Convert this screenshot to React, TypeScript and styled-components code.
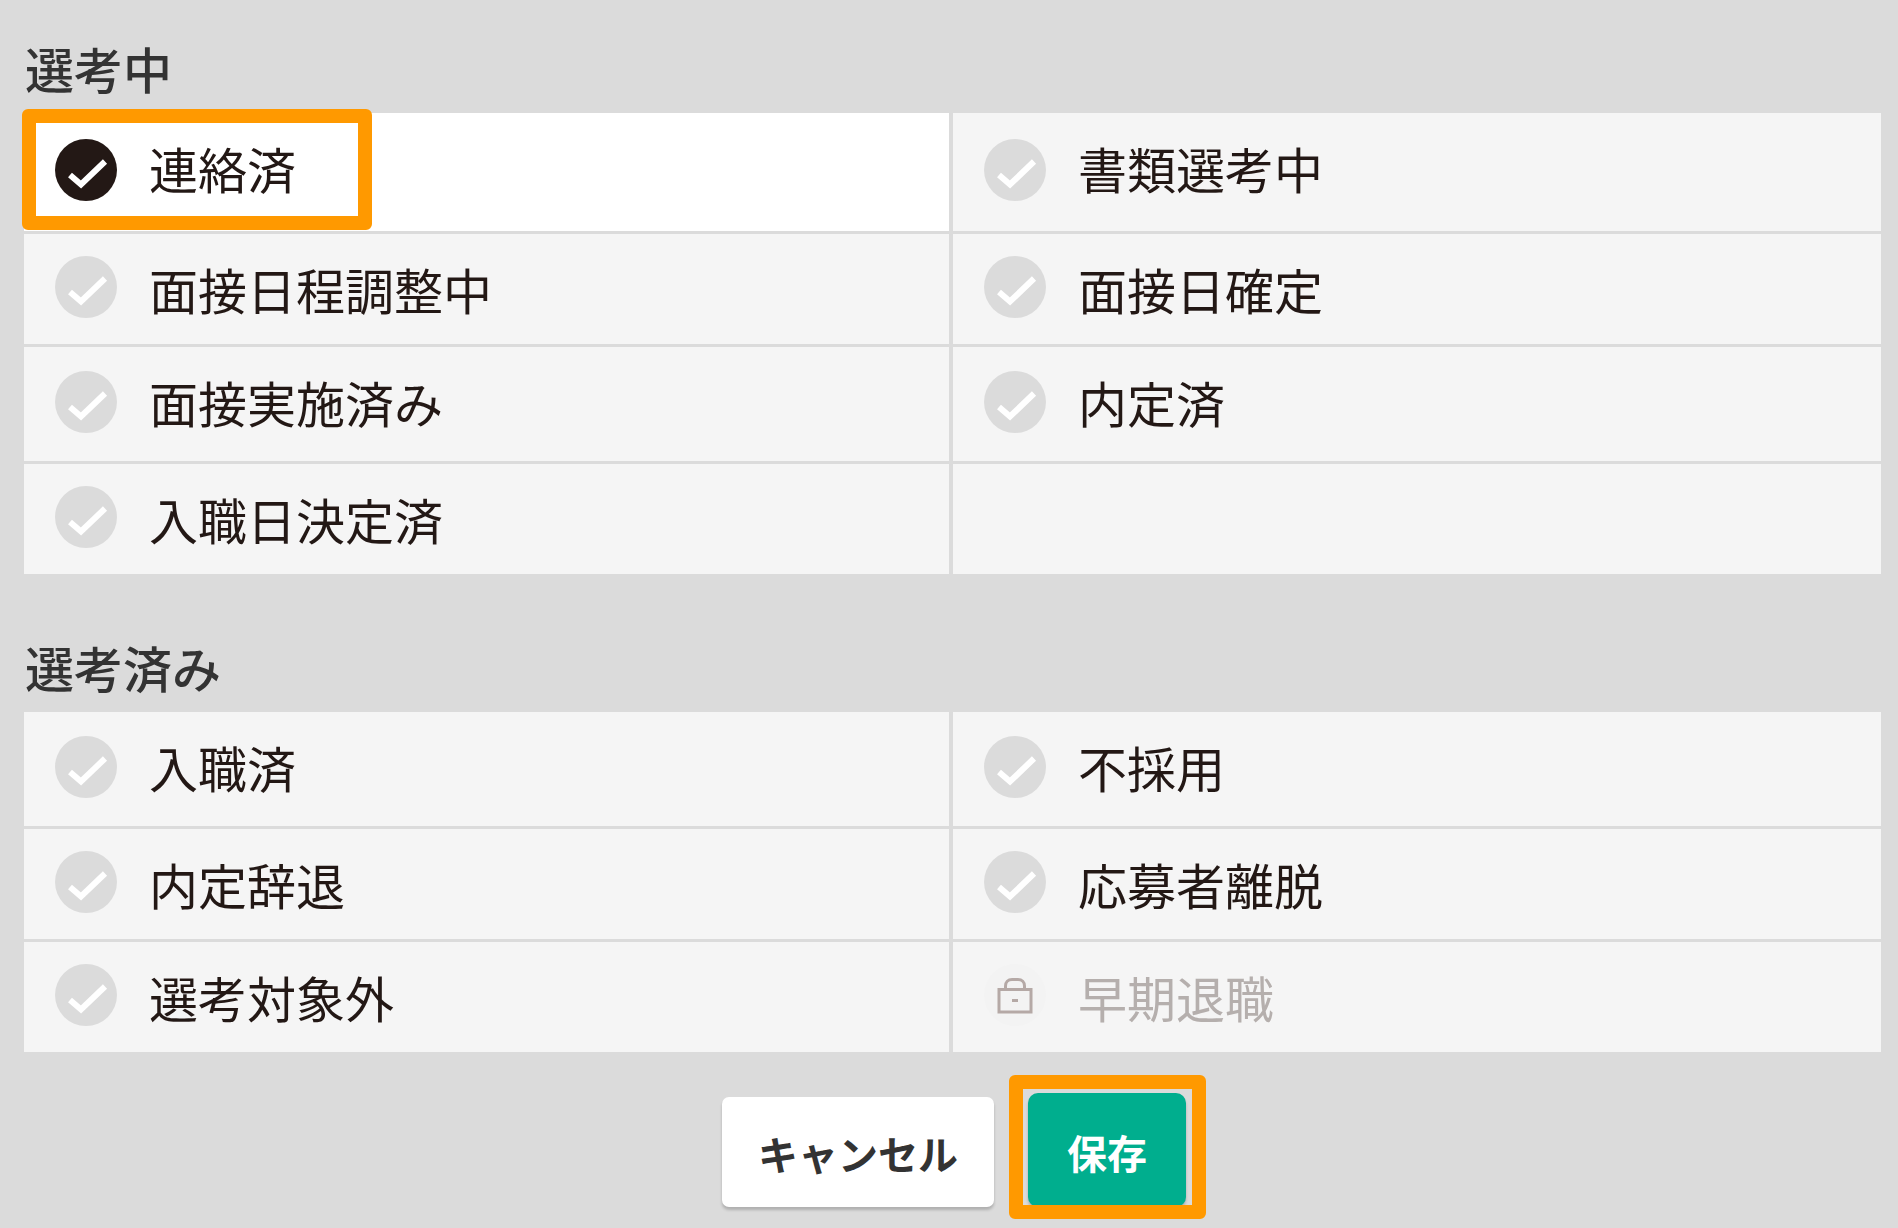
import React, { useState } from "react";
import styled, { createGlobalStyle } from "styled-components";

const GlobalStyle = createGlobalStyle`
  * { box-sizing: border-box; }
  body {
    margin: 0;
    background: #dbdbdb;
    color: #231815;
    font-family: "Noto Sans CJK JP", "Noto Sans", sans-serif;
  }
`;

const Form = styled.form`
  display: flex;
  flex-direction: column;
  padding: 38px 17px 20px 24px;
`;

const Section = styled.fieldset`
  display: flex;
  flex-direction: column;
  min-width: 0;
  margin: 0;
  padding: 0;
  border: 0;

  & + & {
    margin-top: 63px;
  }
`;

const Heading = styled.legend`
  width: 100%;
  padding: 0 1px 15px;
  color: #333;
  font-size: 49px;
  font-weight: 500;
  line-height: 60px;
`;

const Grid = styled.div<{ $rows: string }>`
  display: grid;
  grid-template-columns: 925fr 928fr;
  grid-template-rows: ${(p) => p.$rows};
  gap: 3px 4px;
`;

const Cell = styled.label<{ $selected?: boolean; $locked?: boolean }>`
  position: relative;
  display: flex;
  align-items: center;
  gap: 32px;
  padding: 0 31px 4px;
  background: ${(p) => (p.$selected ? "#fff" : "#f5f5f5")};
  color: ${(p) => (p.$locked ? "#b5afad" : "#231815")};
  cursor: ${(p) => (p.$locked ? "not-allowed" : "pointer")};
`;

const EmptyCell = styled.div`
  background: #f5f5f5;
`;

const Mark = styled.span`
  display: grid;
  flex: none;
  width: 62px;
  height: 62px;

  & > * {
    grid-area: 1 / 1;
  }
`;

const Radio = styled.input`
  appearance: none;
  width: 62px;
  height: 62px;
  margin: 0;
  border-radius: 50%;
  background: #dbdbdb;
  cursor: inherit;

  &:checked {
    background: #231815;
  }

  &:disabled {
    background: #f3f3f3;
  }
`;

const Glyph = styled.svg`
  width: 62px;
  height: 62px;
  fill: none;
  pointer-events: none;
`;

const CellText = styled.span`
  align-self: flex-start;
  padding-top: 25px;
  font-size: 49px;
  line-height: 60px;
  white-space: nowrap;
`;

const Highlight = styled.span`
  position: absolute;
  border: 14px solid #ff9900;
  border-radius: 6px;
  pointer-events: none;
`;

const CellHighlight = styled(Highlight)`
  top: -4px;
  left: -2px;
  width: 350px;
  height: 121px;
`;

const ButtonHighlight = styled(Highlight)`
  inset: -18px -20px -12px -19px;
`;

const Actions = styled.div`
  display: flex;
  justify-content: center;
  align-items: flex-end;
  gap: 34px;
  margin-top: 41px;
  padding-left: 3px;
`;

const ButtonSlot = styled.div`
  position: relative;
  display: flex;
`;

const Button = styled.button<{ $primary?: boolean }>`
  height: ${(p) => (p.$primary ? "114px" : "110px")};
  padding: ${(p) => (p.$primary ? "4px 39px 0" : "2px 36px 0")};
  border: 0;
  border-radius: ${(p) => (p.$primary ? "10px" : "7px")};
  background: ${(p) => (p.$primary ? "#00ae8e" : "#fff")};
  color: ${(p) => (p.$primary ? "#fff" : "#333")};
  box-shadow: 0 3px 3px rgba(0, 0, 0, 0.2);
  font-family: inherit;
  font-size: 40px;
  font-weight: 700;
  line-height: 60px;
  white-space: nowrap;
  cursor: pointer;
`;

const CheckGlyph = () => (
  <Glyph viewBox="0 0 62 62" aria-hidden="true">
    <path d="M15 36 L26 45.5 L50 22.5" stroke="#fff" strokeWidth="6" />
  </Glyph>
);

const LockGlyph = () => (
  <Glyph viewBox="0 0 62 62" aria-hidden="true">
    <g stroke="#b5a9a6" strokeWidth="3">
      <rect x="15" y="25.5" width="32" height="22.5" />
      <path d="M21.5 25 V22 C21.5 18 24 15.5 28 15.5 H34 C38 15.5 40.5 18 40.5 22 V25" />
      <path d="M28 36.5 H34" />
    </g>
  </Glyph>
);

type Status = { label: string; locked?: boolean; highlighted?: boolean };
type Group = { title: string; rows: string; items: (Status | null)[] };

const groups: Group[] = [
  {
    title: "選考中",
    rows: "118px 110px 114px 110px",
    items: [
      { label: "連絡済", highlighted: true },
      { label: "書類選考中" },
      { label: "面接日程調整中" },
      { label: "面接日確定" },
      { label: "面接実施済み" },
      { label: "内定済" },
      { label: "入職日決定済" },
      null,
    ],
  },
  {
    title: "選考済み",
    rows: "114px 110px 110px",
    items: [
      { label: "入職済" },
      { label: "不採用" },
      { label: "内定辞退" },
      { label: "応募者離脱" },
      { label: "選考対象外" },
      { label: "早期退職", locked: true },
    ],
  },
];

export default function App() {
  const [status, setStatus] = useState("連絡済");

  return (
    <>
      <GlobalStyle />
      <Form onSubmit={(e) => e.preventDefault()}>
        {groups.map((group) => (
          <Section key={group.title}>
            <Heading>{group.title}</Heading>
            <Grid $rows={group.rows}>
              {group.items.map((item) =>
                item ? (
                  <Cell
                    key={item.label}
                    $selected={status === item.label}
                    $locked={item.locked}
                  >
                    <Mark>
                      <Radio
                        type="radio"
                        name="status"
                        value={item.label}
                        checked={status === item.label}
                        disabled={item.locked}
                        onChange={() => setStatus(item.label)}
                      />
                      {item.locked ? <LockGlyph /> : <CheckGlyph />}
                    </Mark>
                    <CellText>{item.label}</CellText>
                    {item.highlighted && <CellHighlight />}
                  </Cell>
                ) : (
                  <EmptyCell key="empty" />
                )
              )}
            </Grid>
          </Section>
        ))}
        <Actions>
          <Button type="button">キャンセル</Button>
          <ButtonSlot>
            <Button type="submit" $primary>
              保存
            </Button>
            <ButtonHighlight />
          </ButtonSlot>
        </Actions>
      </Form>
    </>
  );
}
